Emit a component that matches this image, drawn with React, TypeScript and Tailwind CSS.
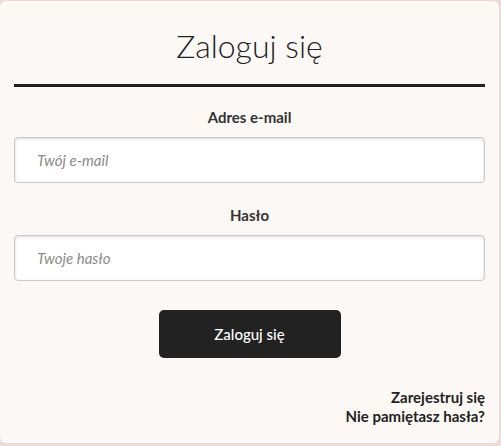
const Field = ({ label, placeholder, type }: { label: string; placeholder: string; type: string }) => {
  return (
    <div className="flex flex-col">
      <label className="text-center text-[15px] font-bold leading-5 text-[#333]">{label}</label>
      <input
        type={type}
        placeholder={placeholder}
        className="mt-[10px] h-[46px] w-full rounded-[4px] border border-[#c9c9c9] bg-white px-[22px] text-[15px] italic text-[#555] shadow-[inset_0_1px_3px_rgba(0,0,0,0.15)] outline-none placeholder:text-[#8a8a8a]"
      />
    </div>
  );
};

const App = () => {
  return (
    <div className="h-[446px] w-[501px] bg-[#ecdad4] pb-[3px] pr-[2px] pt-px font-['Lato',sans-serif]">
      <section className="flex h-full flex-col rounded-md bg-[#fcf8f6] px-[14px]">
        <h1 className="pt-[25px] text-center text-[32px] font-light leading-[40px] text-[#222]">Zaloguj się</h1>
        <div className="mt-[18px] h-[3px] bg-[#222]" />
        <div className="mt-[20px]">
          <Field label="Adres e-mail" placeholder="Twój e-mail" type="email" />
        </div>
        <div className="mt-[22px]">
          <Field label="Hasło" placeholder="Twoje hasło" type="password" />
        </div>
        <button className="mx-auto mt-[29px] h-[48px] w-[182px] rounded-[5px] bg-[#222] text-[15px] font-medium text-white">
          Zaloguj się
        </button>
        <div className="mt-[30px] flex flex-col items-end text-[15px] font-bold leading-[19px] text-[#222]">
          <a href="#">Zarejestruj się</a>
          <a href="#">Nie pamiętasz hasła?</a>
        </div>
      </section>
    </div>
  );
};

export default App;
